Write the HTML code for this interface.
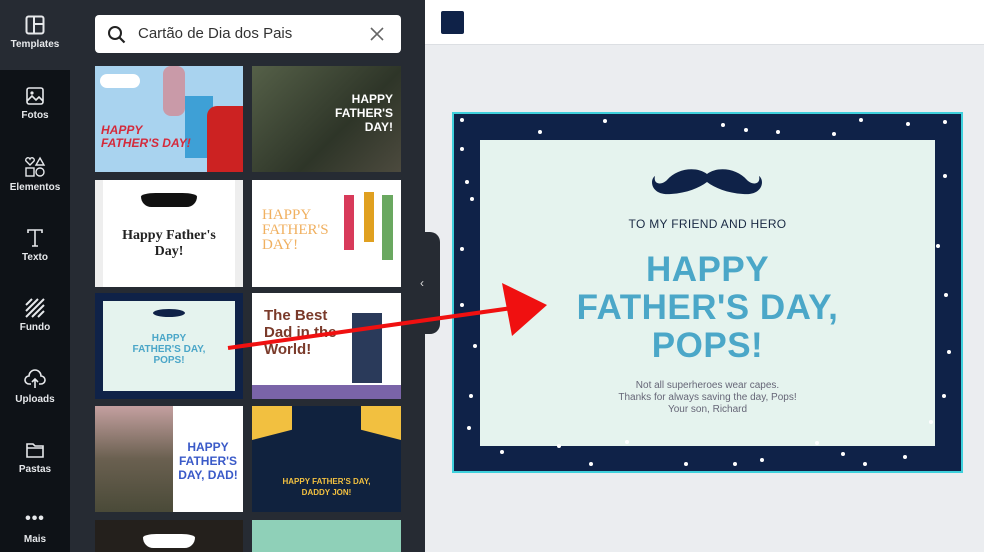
<!DOCTYPE html>
<html><head><meta charset="utf-8"><style>
*{margin:0;padding:0;box-sizing:border-box}
body{width:984px;height:552px;overflow:hidden;position:relative;font-family:"Liberation Sans",sans-serif;background:#ebedf0}
.abs{position:absolute}
.side{left:0;top:0;width:70px;height:552px;background:#0e1217}
.sideTop{left:0;top:0;width:70px;height:70px;background:#262b33}
.panel{left:70px;top:0;width:355px;height:552px;background:#262b33}
.item{position:absolute;left:0;width:70px;text-align:center;color:#e6e8eb;font-size:10px;font-weight:bold}
.item svg{display:block;margin:0 auto 4px}
.search{left:95px;top:15px;width:306px;height:38px;background:#fff;border-radius:4px}
.th{position:absolute;overflow:hidden}
.c1{left:95px;width:148px}.c2{left:252px;width:149px}
.top{left:425px;top:0;width:559px;height:45px;background:#fff;border-bottom:1px solid #dcdfe3}
.card{left:452px;top:112px;width:511px;height:361px;background:#0f2248;border:2px solid #3fd0dc}
.inner{left:480px;top:140px;width:455px;height:306px;background:#e5f3ee}
.t{position:absolute;left:480px;width:455px;text-align:center}
</style></head><body>
<div class="abs side"></div>
<div class="abs panel"></div>
<div class="abs sideTop"></div>
<div class="abs" style="left:70px;top:70px;width:20px;height:20px;background:#262b33"></div>
<div class="abs" style="left:0;top:70px;width:70px;height:482px;background:#0e1217;border-top-right-radius:10px"></div>

<div class="item" style="top:15px"><svg width="20" height="20" viewBox="0 0 20 20"><rect x="1.5" y="1.5" width="17" height="17" rx="2" fill="none" stroke="#e6e8eb" stroke-width="2"/><path d="M9 2v16M9 9h9" stroke="#e6e8eb" stroke-width="2"/></svg>Templates</div>
<div class="item" style="top:86px"><svg width="20" height="20" viewBox="0 0 20 20"><rect x="2" y="2" width="16" height="16" rx="2" fill="none" stroke="#e6e8eb" stroke-width="1.6"/><circle cx="7" cy="7" r="1.6" fill="#e6e8eb"/><path d="M2 15l5-5 4 4 3-3 4 4" fill="none" stroke="#e6e8eb" stroke-width="1.6"/></svg>Fotos</div>
<div class="item" style="top:156px"><svg width="22" height="22" viewBox="0 0 22 22"><path d="M6 9L2 5a2 2 0 0 1 4-2 2 2 0 0 1 4 2z" fill="none" stroke="#e6e8eb" stroke-width="1.4"/><path d="M16 2l4 7h-8z" fill="none" stroke="#e6e8eb" stroke-width="1.4"/><rect x="2" y="12" width="8" height="8" fill="none" stroke="#e6e8eb" stroke-width="1.4"/><circle cx="16" cy="16" r="4" fill="none" stroke="#e6e8eb" stroke-width="1.4"/></svg>Elementos</div>
<div class="item" style="top:228px"><svg width="20" height="20" viewBox="0 0 20 20"><path d="M3 5V2h14v3M10 2v16M7 18h6" fill="none" stroke="#e6e8eb" stroke-width="1.6"/></svg>Texto</div>
<div class="item" style="top:298px"><svg width="20" height="20" viewBox="0 0 20 20"><path d="M1 7l6-6M1 13L13 1M1 19L19 1M7 19L19 7M13 19l6-6" stroke="#e6e8eb" stroke-width="2"/></svg>Fundo</div>
<div class="item" style="top:368px"><svg width="22" height="22" viewBox="0 0 22 22"><path d="M7 16H5a4 4 0 0 1 0-8 6 6 0 0 1 12 0 4 4 0 0 1 0 8h-2" fill="none" stroke="#e6e8eb" stroke-width="1.6"/><path d="M11 20v-9M8 14l3-3 3 3" fill="none" stroke="#e6e8eb" stroke-width="1.6"/></svg>Uploads</div>
<div class="item" style="top:440px"><svg width="20" height="20" viewBox="0 0 20 20"><path d="M2 4h6l2 2h8v11H2z M2 8h16" fill="none" stroke="#e6e8eb" stroke-width="1.6"/></svg>Pastas</div>
<div class="item" style="top:512px"><div style="font-size:16px;line-height:14px;letter-spacing:1px">•••</div><div style="margin-top:8px">Mais</div></div>

<div class="abs search">
<svg class="abs" style="left:12px;top:10px" width="20" height="20" viewBox="0 0 20 20"><circle cx="8" cy="8" r="6" fill="none" stroke="#222" stroke-width="2"/><path d="M12.5 12.5l5 5" stroke="#222" stroke-width="2.2"/></svg>
<div class="abs" style="left:43px;top:10px;font-size:15px;color:#333">Cartão de Dia dos Pais</div>
<svg class="abs" style="left:275px;top:12px" width="14" height="14" viewBox="0 0 14 14"><path d="M1 1l12 12M13 1L1 13" stroke="#666" stroke-width="1.6"/></svg>
</div>

<div class="th c1" style="top:66px;height:106px;background:#a9d3ef">
 <div class="abs" style="left:5px;top:8px;width:40px;height:14px;background:#fff;border-radius:8px"></div>
 <div class="abs" style="left:90px;top:30px;width:28px;height:62px;background:#3ea0d6"></div>
 <div class="abs" style="left:112px;top:40px;width:36px;height:66px;background:#c22;border-radius:10px 0 0 0"></div>
 <div class="abs" style="left:68px;top:0;width:22px;height:50px;background:#c99aa8;border-radius:8px"></div>
 <div class="abs" style="left:6px;top:58px;font-size:12px;font-weight:bold;font-style:italic;color:#d42a3b;line-height:13px">HAPPY<br>FATHER'S DAY!</div>
</div>
<div class="th c2" style="top:66px;height:106px;background:linear-gradient(135deg,#556048,#2e3528 60%,#4c4a3e)">
 <div class="abs" style="right:8px;top:26px;font-size:12px;font-weight:bold;color:#fff;text-align:right;line-height:14px">HAPPY<br>FATHER'S<br>DAY!</div>
</div>
<div class="th c1" style="top:180px;height:107px;background:#fff;border-left:8px solid #eee;border-right:8px solid #eee">
 <div class="abs" style="left:38px;top:13px;width:56px;height:14px;background:#111;border-radius:50% 50% 20px 20px"></div>
 <div class="abs" style="left:0;width:132px;top:48px;text-align:center;font-family:'Liberation Serif',serif;font-weight:bold;font-size:14px;line-height:16px;color:#222">Happy Father's<br>Day!</div>
</div>
<div class="th c2" style="top:180px;height:107px;background:#fff">
 <div class="abs" style="left:10px;top:28px;font-family:'Liberation Serif',serif;font-size:15px;line-height:15px;color:#f0b060">HAPPY<br>FATHER'S<br>DAY!</div>
 <div class="abs" style="left:92px;top:15px;width:10px;height:55px;background:#d83a5a"></div>
 <div class="abs" style="left:112px;top:12px;width:10px;height:50px;background:#e0a020"></div>
 <div class="abs" style="left:130px;top:15px;width:11px;height:65px;background:#6aa860"></div>
</div>
<div class="th c1" style="top:293px;height:106px;background:#0f2248">
 <div class="abs" style="left:8px;top:8px;width:132px;height:90px;background:#e5f3ee"></div>
 <div class="abs" style="left:58px;top:16px;width:32px;height:8px;background:#0f2248;border-radius:50%"></div>
 <div class="abs" style="left:0;width:148px;top:40px;text-align:center;font-size:10px;font-weight:bold;color:#4aa6c8;line-height:11px">HAPPY<br>FATHER'S DAY,<br>POPS!</div>
</div>
<div class="th c2" style="top:293px;height:106px;background:#fff">
 <div class="abs" style="left:12px;top:14px;font-size:15px;font-weight:bold;color:#7a3a2a;line-height:17px;white-space:nowrap">The Best<br>Dad in the<br>World!</div>
 <div class="abs" style="left:100px;top:20px;width:30px;height:70px;background:#2a3a5a"></div>
 <div class="abs" style="left:0;top:92px;width:149px;height:14px;background:#7a64a8"></div>
</div>
<div class="th c1" style="top:406px;height:106px;background:#fff">
 <div class="abs" style="left:0;top:0;width:78px;height:106px;background:linear-gradient(#c4a0a0,#6a6050 50%,#4a4a38)"></div>
 <div class="abs" style="left:80px;top:34px;width:66px;text-align:center;font-size:12px;font-weight:bold;color:#3a5ac8;line-height:14px;white-space:nowrap">HAPPY<br>FATHER'S<br>DAY, DAD!</div>
</div>
<div class="th c2" style="top:406px;height:106px;background:#10223e">
 <div class="abs" style="left:0;top:0;width:40px;height:34px;background:#f2c040;clip-path:polygon(0 0,100% 0,100% 70%,0 100%)"></div>
 <div class="abs" style="right:0;top:0;width:40px;height:34px;background:#f2c040;clip-path:polygon(0 0,100% 0,100% 100%,0 70%)"></div>
 <div class="abs" style="left:0;width:149px;top:70px;text-align:center;font-size:8px;font-weight:bold;color:#f2c040;line-height:11px">HAPPY FATHER'S DAY,<br>DADDY JON!</div>
</div>
<div class="th c1" style="top:520px;height:32px;background:#24201c"><div class="abs" style="left:48px;top:14px;width:52px;height:14px;background:#fff;border-radius:50% 50% 20px 20px"></div></div>
<div class="th c2" style="top:520px;height:32px;background:#8fd0b8"></div>

<div class="abs" style="left:414px;top:232px;width:26px;height:102px;background:#262b33;border-radius:0 10px 10px 0"></div>
<div class="abs" style="left:420px;top:276px;color:#ddd;font-size:12px">‹</div>

<div class="abs top"></div>
<div class="abs" style="left:441px;top:11px;width:23px;height:23px;background:#0f2248;border-radius:2px"></div>

<div class="abs card"></div>
<div class="abs inner"></div>
<svg class="abs" style="left:452px;top:112px" width="511" height="361">
<g fill="#fff">
<circle cx="10" cy="8" r="2"/><circle cx="88" cy="20" r="2"/><circle cx="153" cy="9" r="2"/><circle cx="271" cy="13" r="2"/><circle cx="294" cy="18" r="2"/><circle cx="326" cy="20" r="2"/><circle cx="382" cy="22" r="2"/><circle cx="409" cy="8" r="2"/><circle cx="456" cy="12" r="2"/><circle cx="493" cy="10" r="2"/>
<circle cx="10" cy="37" r="2"/><circle cx="15" cy="70" r="2"/><circle cx="20" cy="87" r="2"/><circle cx="10" cy="137" r="2"/><circle cx="10" cy="193" r="2"/><circle cx="23" cy="234" r="2"/><circle cx="19" cy="284" r="2"/><circle cx="17" cy="316" r="2"/>
<circle cx="493" cy="64" r="2"/><circle cx="486" cy="134" r="2"/><circle cx="494" cy="183" r="2"/><circle cx="497" cy="240" r="2"/><circle cx="492" cy="284" r="2"/><circle cx="479" cy="310" r="2"/>
<circle cx="50" cy="340" r="2"/><circle cx="107" cy="334" r="2"/><circle cx="139" cy="352" r="2"/><circle cx="175" cy="330" r="2"/><circle cx="234" cy="352" r="2"/><circle cx="283" cy="352" r="2"/><circle cx="310" cy="348" r="2"/><circle cx="365" cy="331" r="2"/><circle cx="391" cy="342" r="2"/><circle cx="413" cy="352" r="2"/><circle cx="453" cy="345" r="2"/>
</g></svg>
<svg class="abs" style="left:649px;top:166px" width="116" height="32" viewBox="0 0 116 32"><path d="M58 8C48 0 28 2 18 14 12 20 4 18 6 10 0 14 2 30 22 28 38 27 50 22 58 16 66 22 78 27 94 28 114 30 116 14 110 10 112 18 104 20 98 14 88 2 68 0 58 8z" fill="#0f2248"/></svg>
<div class="t" style="top:217px;font-size:12px;color:#1a2a44;letter-spacing:.3px">TO MY FRIEND AND HERO</div>
<div class="t" style="top:251px;font-size:35px;font-weight:bold;color:#4ba7c8;line-height:38px;letter-spacing:0.5px">HAPPY<br>FATHER'S DAY,<br>POPS!</div>
<div class="t" style="top:380px;font-size:10px;color:#667;line-height:12px">Not all superheroes wear capes.<br>Thanks for always saving the day, Pops!<br>Your son, Richard</div>

<svg class="abs" style="left:0;top:0" width="984" height="552"><path d="M228 348L512 308" stroke="#f01010" stroke-width="4"/><polygon points="502,283 547,305 512,336" fill="#f01010"/></svg>
</body></html>
